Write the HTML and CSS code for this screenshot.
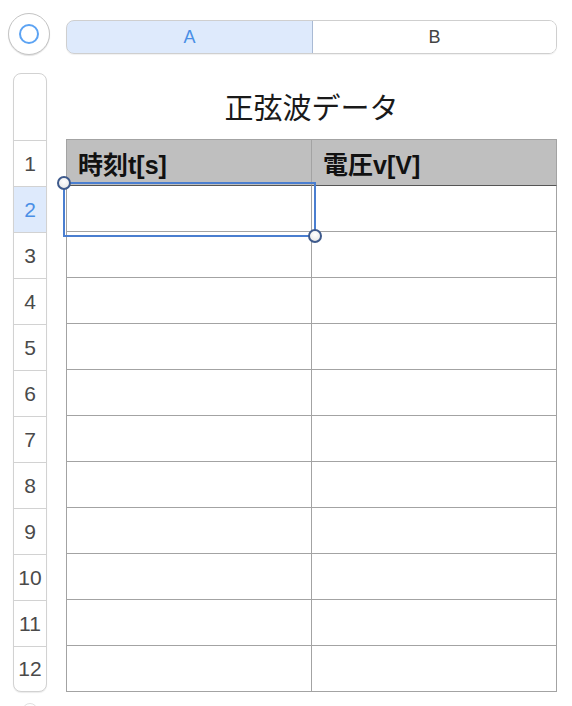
FILE: index.html
```html
<!DOCTYPE html>
<html lang="ja">
<head>
<meta charset="utf-8">
<link rel="stylesheet" href="styles.css">
</head>
<body>
<div class="top">
  <div class="corner-btn"><span class="ring"></span></div>
  <div class="colbar">
    <div class="colhead sel">A</div>
    <div class="colhead">B</div>
  </div>
</div>
<div class="main">
  <div class="rowbar">
    <div class="rowhead blank"></div>
    <div class="rowhead">1</div>
    <div class="rowhead sel">2</div>
    <div class="rowhead">3</div>
    <div class="rowhead">4</div>
    <div class="rowhead">5</div>
    <div class="rowhead">6</div>
    <div class="rowhead">7</div>
    <div class="rowhead">8</div>
    <div class="rowhead">9</div>
    <div class="rowhead">10</div>
    <div class="rowhead">11</div>
    <div class="rowhead last">12</div>
  </div>
  <div class="sheet">
    <div class="title">正弦波データ</div>
    <div class="table">
      <div class="cell th">時刻t[s]</div>
      <div class="cell th">電圧v[V]</div>
      <div class="cell"></div><div class="cell"></div>
      <div class="cell"></div><div class="cell"></div>
      <div class="cell"></div><div class="cell"></div>
      <div class="cell"></div><div class="cell"></div>
      <div class="cell"></div><div class="cell"></div>
      <div class="cell"></div><div class="cell"></div>
      <div class="cell"></div><div class="cell"></div>
      <div class="cell"></div><div class="cell"></div>
      <div class="cell"></div><div class="cell"></div>
      <div class="cell"></div><div class="cell"></div>
      <div class="cell"></div><div class="cell"></div>
      <div class="selection">
        <span class="handle h-tl"></span>
        <span class="handle h-br"></span>
      </div>
    </div>
  </div>
</div>
<div class="peek"></div>
</body>
</html>
```
FILE: styles.css
```css
html, body {
  margin: 0;
  padding: 0;
  background: #ffffff;
  width: 572px;
  height: 706px;
  overflow: hidden;
  font-family: "Liberation Sans", "Noto Sans CJK JP", sans-serif;
}
.top {
  display: flex;
  align-items: flex-start;
  padding: 13px 0 0 8px;
  height: 60px;
  box-sizing: border-box;
}
.corner-btn {
  width: 42px;
  height: 42px;
  box-sizing: border-box;
  border: 1px solid #c4c4c4;
  border-radius: 50%;
  background: #fff;
  box-shadow: 0 1px 1px rgba(0,0,0,0.12);
  display: flex;
  align-items: center;
  justify-content: center;
}
.ring {
  width: 20px;
  height: 20px;
  box-sizing: border-box;
  border: 2px solid #5ca3f3;
  border-radius: 50%;
}
.colbar {
  margin: 7px 0 0 16px;
  width: 491px;
  height: 34px;
  display: flex;
  box-sizing: border-box;
  border: 1px solid #cfcfcf;
  border-radius: 8px;
  overflow: hidden;
  box-shadow: 0 1px 1px rgba(0,0,0,0.06);
}
.colhead {
  flex: 0 0 244px;
  display: flex;
  align-items: center;
  justify-content: center;
  font-size: 18px;
  color: #444;
  background: #fff;
}
.colhead + .colhead { flex: 1; }
.colhead.sel {
  background: #deeafc;
  color: #4a8fe6;
  margin: -1px 0 -1px -1px;
  border: 1px solid #a9bad4;
  border-radius: 8px 0 0 8px;
  flex-basis: 245px;
}
.main {
  display: flex;
  align-items: flex-start;
  padding: 13px 0 0 13px;
}
.rowbar {
  width: 34px;
  box-sizing: border-box;
  border: 1px solid #d2d2d2;
  border-radius: 8px;
  overflow: hidden;
  box-shadow: 0 1px 1px rgba(0,0,0,0.08);
  background: #fff;
}
.rowhead {
  height: 46px;
  box-sizing: border-box;
  border-top: 1px solid #d2d2d2;
  display: flex;
  align-items: center;
  justify-content: center;
  font-size: 21px;
  color: #4a4a4a;
}
.rowhead.blank {
  height: 66px;
  border-top: none;
}
.rowhead.sel {
  background: #deeafc;
  color: #4a8fe6;
}
.rowhead.last { height: 45px; }
.sheet {
  margin-left: 19px;
  width: 491px;
}
.title {
  height: 66px;
  display: flex;
  align-items: center;
  justify-content: center;
  font-family: "Noto Sans CJK JP", sans-serif;
  font-size: 29px;
  color: #1a1a1a;
}
.table {
  position: relative;
  display: grid;
  grid-template-columns: 245px 245px;
  grid-auto-rows: 46px;
  border-top: 1px solid #a3a3a3;
  border-left: 1px solid #a3a3a3;
  width: 491px;
  box-sizing: border-box;
}
.cell {
  border-right: 1px solid #a3a3a3;
  border-bottom: 1px solid #a3a3a3;
  background: #fff;
}
.cell.th {
  background: #bfbfbf;
  border-bottom: 1px solid #555;
  font-family: "Liberation Sans", "Noto Sans CJK JP", sans-serif;
  font-weight: 700;
  font-size: 25px;
  color: #111;
  display: flex;
  align-items: center;
  padding-left: 11px;
}
.selection {
  position: absolute;
  left: -4px;
  top: 42px;
  width: 253px;
  height: 55px;
  box-sizing: border-box;
  border: 2px solid #4a7ed0;
}
.handle {
  position: absolute;
  width: 14px;
  height: 14px;
  box-sizing: border-box;
  border: 2px solid #3e5a8c;
  border-radius: 50%;
  background: radial-gradient(circle at 50% 35%, #ffffff, #e2e2e2);
}
.h-tl { left: -8px; top: -8px; }
.h-br { right: -8px; bottom: -8px; }
.peek {
  position: absolute;
  left: 22px;
  top: 703px;
  width: 14px;
  height: 14px;
  border-radius: 50%;
  border: 1px solid #e0e0e0;
}
```
